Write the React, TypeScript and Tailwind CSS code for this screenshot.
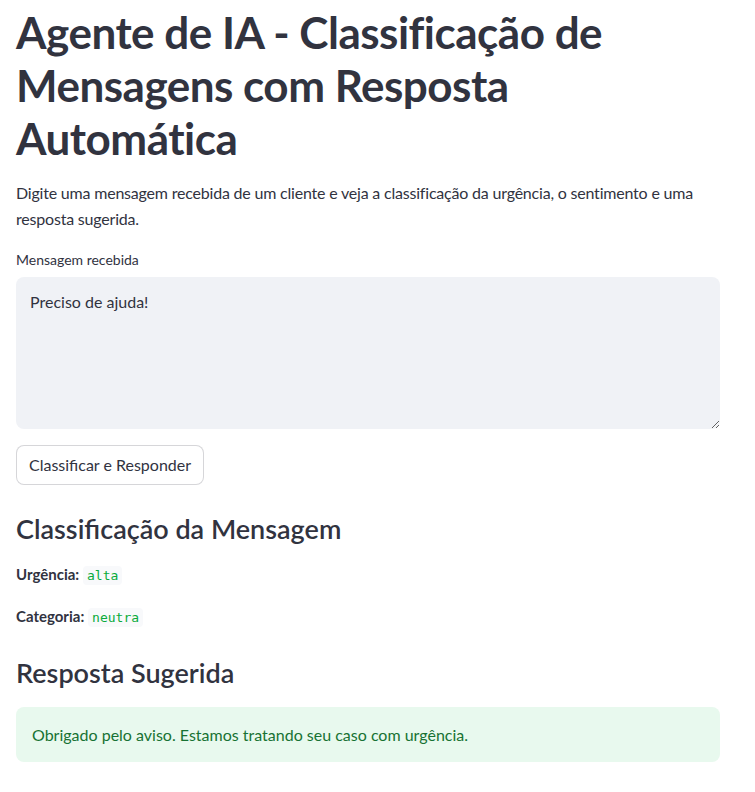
export default function App() {
  const font = { fontFamily: 'Lato, "Noto Sans", sans-serif' };
  const mono = { fontFamily: '"DejaVu Sans Mono", monospace' };
  return (
    <div className="min-h-[792px] w-[755px] bg-white text-[#31333f]" style={font}>
      <div className="ml-4 w-[704px] pt-[6px]">
        <h1 className="w-[600px] text-[44px] font-bold leading-[53px] tracking-[-0.5px]">
          Agente de IA - Classificação de Mensagens com Resposta Automática
        </h1>
        <p className="mt-[15px] text-[16px] leading-[25.6px] tracking-[-0.2px]">
          Digite uma mensagem recebida de um cliente e veja a classificação da urgência, o sentimento e uma resposta sugerida.
        </p>
        <div className="mt-[19px] text-[14px] leading-[20px]">Mensagem recebida</div>
        <div className="mt-[7px] flex">
          <textarea
            defaultValue="Preciso de ajuda!"
            className="h-[152px] w-[704px] resize-y rounded-[8px] bg-[#f0f2f6] px-[14px] py-[12px] text-[16px] leading-[25.6px] text-[#31333f] outline-none"
            style={font}
          />
        </div>
        <button className="mt-[16px] h-[40px] rounded-[8px] border border-[rgba(49,51,63,0.2)] bg-white px-[12px] text-[16px] text-[#31333f]">
          Classificar e Responder
        </button>
        <h2 className="mt-[26px] text-[27px] font-semibold leading-[36px]">Classificação da Mensagem</h2>
        <p className="mt-[15px] text-[15px] leading-[24px]">
          <span className="font-bold">Urgência:</span>{' '}
          <code className="rounded-[4px] bg-[#f8f9fb] px-[4px] py-[2px] text-[13px] text-[#09ab3b]" style={mono}>alta</code>
        </p>
        <p className="mt-[16px] text-[15px] leading-[24px]">
          <span className="font-bold">Categoria:</span>{' '}
          <code className="rounded-[4px] bg-[#f8f9fb] px-[4px] py-[2px] text-[13px] text-[#09ab3b]" style={mono}>neutra</code>
        </p>
        <h2 className="mt-[25px] text-[27px] font-semibold leading-[36px]">Resposta Sugerida</h2>
        <div className="mt-[16px] flex h-[55px] items-center rounded-[8px] bg-[#e8f9ee] px-[16px] text-[16px] text-[#177233]">
          Obrigado pelo aviso. Estamos tratando seu caso com urgência.
        </div>
      </div>
    </div>
  );
}
